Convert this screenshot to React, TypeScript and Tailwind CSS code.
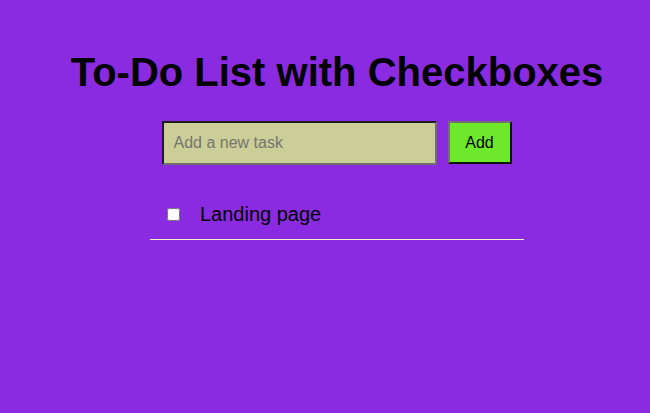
import React, { useState } from "react";

export default function App() {
  const [tasks, setTasks] = useState([{ text: "Landing page", done: false }]);
  const [value, setValue] = useState("");
  const add = () => {
    if (!value.trim()) return;
    setTasks([...tasks, { text: value, done: false }]);
    setValue("");
  };
  return (
    <div
      className="w-[650px] h-[413px] bg-[#8a2be2] flex flex-col items-center pl-[24px] pt-[49px]"
      style={{ fontFamily: '"Liberation Sans", Arial, sans-serif' }}
    >
      <h1 className="text-[40px] font-bold leading-[46px] text-black whitespace-nowrap">
        To-Do List with Checkboxes
      </h1>
      <div className="flex mt-[26px] gap-[11px] pr-[1px]">
        <input
          value={value}
          onChange={(e) => setValue(e.target.value)}
          placeholder="Add a new task"
          className="w-[275px] h-[44px] px-[10px] text-[16px] bg-[#cbcf97] text-black placeholder:text-[#757570] border-2 border-t-[#1c1c1c] border-l-[#1c1c1c] border-r-[#6f6f6f] border-b-[#6f6f6f] outline-none"
        />
        <button
          onClick={add}
          className="w-[64px] h-[43px] text-[16px] bg-[#6de82b] text-black border-2 border-t-[#707070] border-l-[#707070] border-r-[#111] border-b-[#111]"
        >
          Add
        </button>
      </div>
      <div className="w-[374px] mt-[30px]">
        {tasks.map((t, i) => (
          <div key={i} className="pt-[8px] pb-[13px] border-b border-[#f5f0c8]">
            <div className="flex items-center h-[23px] pl-[17px]">
              <input
                type="checkbox"
                checked={t.done}
                onChange={() =>
                  setTasks(tasks.map((x, j) => (j === i ? { ...x, done: !x.done } : x)))
                }
                className="m-0 w-[13px] h-[13px]"
              />
              <span className="ml-[20px] text-[20px] leading-[23px] text-black">{t.text}</span>
            </div>
          </div>
        ))}
      </div>
    </div>
  );
}
